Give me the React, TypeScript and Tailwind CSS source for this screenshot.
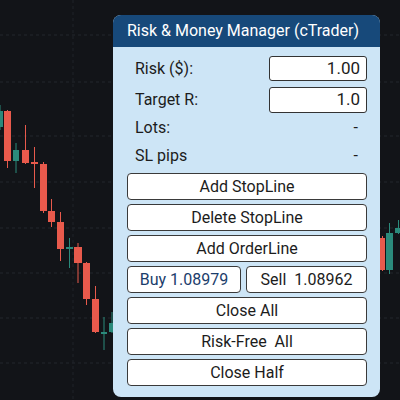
import React from 'react';

type Candle = { x: number; w: number; o: number; c: number; h: number; l: number; up: boolean };

const candles: Candle[] = [
  { x: -3, w: 6, o: 127, c: 111, h: 105, l: 130, up: true },
  { x: 4, w: 7, o: 111, c: 161, h: 110, l: 168, up: false },
  { x: 13, w: 6, o: 161, c: 150, h: 143, l: 173, up: true },
  { x: 22, w: 7, o: 150, c: 163, h: 125, l: 164, up: false },
  { x: 31, w: 7, o: 162, c: 164, h: 147, l: 188, up: false },
  { x: 40, w: 7, o: 164, c: 211, h: 162, l: 213, up: false },
  { x: 48, w: 7, o: 211, c: 222, h: 199, l: 227, up: false },
  { x: 57, w: 7, o: 222, c: 249, h: 212, l: 261, up: false },
  { x: 66, w: 7, o: 249, c: 247, h: 238, l: 268, up: true },
  { x: 74, w: 8, o: 247, c: 263, h: 243, l: 283, up: false },
  { x: 83, w: 7, o: 263, c: 299, h: 262, l: 305, up: false },
  { x: 92, w: 7, o: 299, c: 332, h: 286, l: 333, up: false },
  { x: 101, w: 6, o: 333, c: 332, h: 317, l: 350, up: true },
  { x: 109, w: 6, o: 332, c: 323, h: 312, l: 333, up: true },
  { x: 380, w: 5, o: 238, c: 270, h: 236, l: 271, up: false },
  { x: 386, w: 7, o: 270, c: 233, h: 223, l: 274, up: true },
  { x: 395, w: 7, o: 233, c: 228, h: 220, l: 234, up: true },
];

function Chart() {
  const rows = [35, 82, 136, 182, 228, 273, 318, 363];
  return (
    <svg className="absolute inset-0" width="400" height="400" viewBox="0 0 400 400">
      <rect width="400" height="400" fill="#121418" />
      {rows.map((y) => (
        <line key={y} x1="0" x2="400" y1={y} y2={y} stroke="#22262c" strokeWidth="1" strokeDasharray="3 3" />
      ))}
      <line x1="73" x2="73" y1="0" y2="400" stroke="#1e2228" strokeWidth="1" strokeDasharray="3 3" />
      {candles.map((c, i) => {
        const col = c.up ? '#2b8a7b' : '#e85a4c';
        const top = Math.min(c.o, c.c);
        const bh = Math.max(2, Math.abs(c.o - c.c));
        return (
          <g key={i}>
            <line x1={c.x + c.w / 2} x2={c.x + c.w / 2} y1={c.h} y2={c.l} stroke={col} strokeWidth="1" />
            <rect x={c.x} y={top} width={c.w} height={bh} fill={col} />
          </g>
        );
      })}
    </svg>
  );
}

function Btn({ children, className = '' }: { children: React.ReactNode; className?: string }) {
  return (
    <div
      className={`h-[27px] flex items-center justify-center bg-white border border-[#3a3a3a] rounded-[4px] text-[16px] whitespace-pre ${className}`}
    >
      {children}
    </div>
  );
}

export default function App() {
  return (
    <div className="relative w-[400px] h-[400px] overflow-hidden" style={{ fontFamily: 'Roboto, "Noto Sans", sans-serif' }}>
      <Chart />

      {/* Manager panel */}
      <div className="absolute left-[113px] top-[15px] w-[267px] h-[382px] rounded-[8px] overflow-hidden bg-[#cde5f6] flex flex-col">
        <div className="h-[32px] bg-[#17497a] text-white text-[16px] whitespace-nowrap flex items-center px-[14px]">
          Risk &amp; Money Manager (cTrader)
        </div>

        <div className="flex flex-col px-[13px] pl-[14px] text-[#1c1c1c]">
          <div className="flex items-center justify-between mt-[9px] h-[25px]">
            <span className="pl-[8px] text-[16px]">Risk ($):</span>
            <div className="w-[98px] h-[25px] bg-white border border-[#333] rounded-[3px] flex items-center justify-end pr-[6px] text-[17px]">
              1.00
            </div>
          </div>
          <div className="flex items-center justify-between mt-[6px] h-[26px]">
            <span className="pl-[8px] text-[16px]">Target R:</span>
            <div className="w-[98px] h-[26px] bg-white border border-[#333] rounded-[3px] flex items-center justify-end pr-[6px] text-[17px]">
              1.0
            </div>
          </div>
          <div className="flex items-center justify-between h-[28px] mt-[1px]">
            <span className="pl-[8px] text-[16px]">Lots:</span>
            <span className="pr-[9px] text-[16px]">-</span>
          </div>
          <div className="flex items-center justify-between h-[27px]">
            <span className="pl-[8px] text-[16px]">SL pips</span>
            <span className="pr-[9px] text-[16px]">-</span>
          </div>

          <div className="flex flex-col gap-[4px] mt-[4px]">
            <Btn>Add StopLine</Btn>
            <Btn>Delete StopLine</Btn>
            <Btn>Add OrderLine</Btn>
            <div className="flex gap-[5px]">
              <Btn className="w-[114px] text-[#1b3d6b]">Buy 1.08979</Btn>
              <Btn className="flex-1">Sell  1.08962</Btn>
            </div>
            <Btn>Close All</Btn>
            <Btn>Risk-Free  All</Btn>
            <Btn>Close Half</Btn>
          </div>
        </div>
      </div>
    </div>
  );
}
